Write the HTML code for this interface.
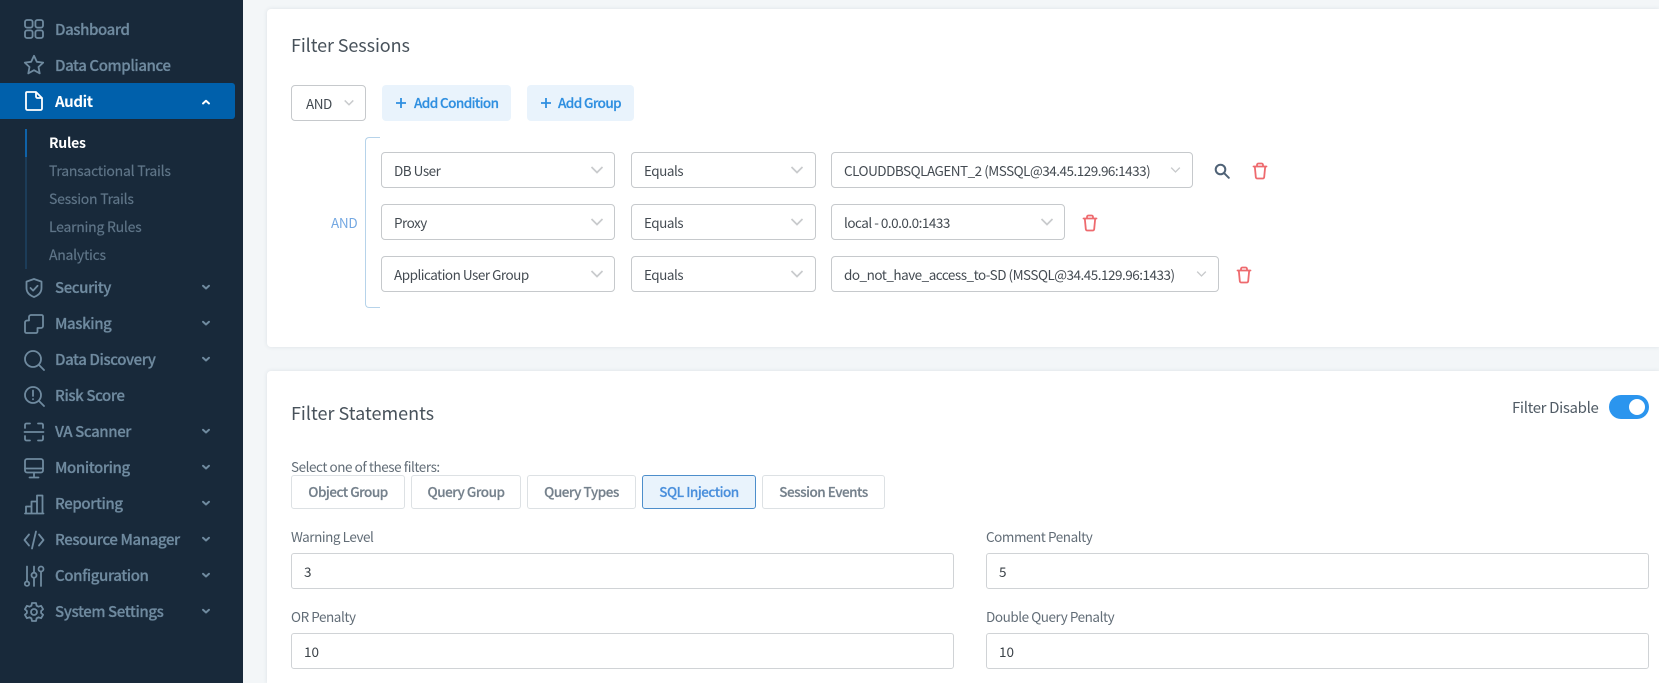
<!DOCTYPE html>
<html><head><meta charset="utf-8">
<style>
*{box-sizing:border-box;margin:0;padding:0}
html,body{width:1659px;height:683px;overflow:hidden;background:#f3f6f8;font-family:"Noto Sans CJK JP","Liberation Sans",sans-serif;}
#wrap{position:relative;width:1659px;height:683px;overflow:hidden}
.a{position:absolute;white-space:nowrap}
#side{position:absolute;left:0;top:0;width:243px;height:683px;background:#18293a}
.card{position:absolute;left:267px;width:1392px;background:#fff;border-radius:4px 0 0 4px;box-shadow:0 0 4px rgba(60,80,100,.12)}
.nav{position:absolute;left:55px;font-size:15px;line-height:20px;font-weight:500;color:#6f8a9f;letter-spacing:-.4px;-webkit-text-stroke:.25px currentColor}
.sub{position:absolute;left:49px;font-size:14px;line-height:20px;color:#5f7588;letter-spacing:-.25px;-webkit-text-stroke:.15px currentColor}
.ic{position:absolute;left:23px;width:22px;height:22px;fill:none;stroke:#6f8a9f;stroke-width:1.8;stroke-linecap:round;stroke-linejoin:round}
.cv{position:absolute;left:201px;width:10px;height:10px;fill:none;stroke:#6f8a9f;stroke-width:2;stroke-linecap:round;stroke-linejoin:round}
.sel{position:absolute;height:36px;background:#fff;border:1px solid #c6c9cc;border-radius:4px;font-size:13.5px;line-height:34px;padding-left:12px;color:#444b52;white-space:nowrap;letter-spacing:-.5px}
.sel svg{position:absolute;top:12px;width:14px;height:10px;fill:none;stroke:#c8cacc;stroke-width:1.7}
.btn{position:absolute;top:85px;height:36px;background:#e9f3fc;border-radius:4px;color:#2f8fe0;font-size:13.5px;line-height:35px;font-weight:500;white-space:nowrap;letter-spacing:-.6px;-webkit-text-stroke:.2px currentColor}
.tab{position:absolute;top:475px;height:34px;background:#fff;border:1px solid #dde1e4;border-radius:3px;color:#75818c;font-size:13.5px;font-weight:500;line-height:30px;text-align:center;letter-spacing:-.5px;-webkit-text-stroke:.2px currentColor}
.lab{position:absolute;font-size:13.5px;line-height:18px;color:#626d77;letter-spacing:-.45px;white-space:nowrap}
.inp{position:absolute;height:36px;width:663px;background:#fff;border:1px solid #d0d3d6;border-radius:3px;font-size:13.5px;line-height:34px;padding-left:12px;color:#3c4349}
.del{position:absolute;width:16px;height:18px;fill:none;stroke:#ee6a6e;stroke-width:1.8;stroke-linecap:round;stroke-linejoin:round}
</style></head><body><div id="wrap">
<div id="side">
<div class="a" style="left:0;top:83px;width:235px;height:36px;background:#0060ab;border-radius:0 3px 3px 0"></div>

<svg class="ic" style="top:18px" viewBox="0 0 22 22"><rect x="2" y="2" width="7.6" height="7.6" rx="2"/><rect x="12.4" y="2" width="7.6" height="7.6" rx="2"/><rect x="2" y="12.4" width="7.6" height="7.6" rx="2"/><rect x="12.4" y="12.4" width="7.6" height="7.6" rx="2"/></svg>
<div class="nav" style="top:20px">Dashboard</div>
<svg class="ic" style="top:54px" viewBox="0 0 22 22"><path d="M11 1.8l2.8 6 6.4.8-4.7 4.4 1.2 6.400-5.700-3.200-5.700 3.200 1.200-6.400L1.800 8.600l6.400-.8z"/></svg>
<div class="nav" style="top:56px">Data Compliance</div>
<svg class="ic" style="top:90px;stroke:#fff" viewBox="0 0 22 22"><path d="M4 2h9l6 6v10.500a1.500 1.500 0 0 1-1.500 1.500h-13A1.500 1.500 0 0 1 3 18.500V3a1 1 0 0 1 1-1zM13 2v4.500a1.500 1.500 0 0 0 1.500 1.500H19"/></svg>
<div class="nav" style="top:92px;color:#fff;font-weight:700;-webkit-text-stroke:0">Audit</div>
<svg class="cv" style="top:97px;stroke:#fff" viewBox="0 0 10 10"><path d="M2 6.500L5 3.800 8 6.500"/></svg>

<div class="a" style="left:25px;top:129px;width:2px;height:140px;background:#1c3c58"></div>
<div class="a" style="left:25px;top:129px;width:2px;height:28px;background:#0f62a8"></div>
<div class="sub" style="top:133px;color:#fff;font-weight:700;-webkit-text-stroke:0">Rules</div>
<div class="sub" style="top:161px">Transactional Trails</div>
<div class="sub" style="top:189px">Session Trails</div>
<div class="sub" style="top:217px">Learning Rules</div>
<div class="sub" style="top:245px">Analytics</div>

<svg class="ic" style="top:277px" viewBox="0 0 22 22"><path d="M11 2l7.500 2.600v6.400c0 4.200-3 7.300-7.500 9-4.500-1.700-7.500-4.800-7.500-9V4.600zM7.500 11l2.600 2.600 4.500-4.800"/></svg>
<div class="nav" style="top:278px">Security</div>
<svg class="cv" style="top:282px" viewBox="0 0 10 10"><path d="M2 3.800L5 6.500 8 3.800"/></svg>

<svg class="ic" style="top:313px" viewBox="0 0 22 22"><path d="M8 2h10.500A1.500 1.500 0 0 1 20 3.500V13a2 2 0 0 1-2 2h-3.500v3.500a1.500 1.500 0 0 1-1.500 1.500H3.500A1.500 1.500 0 0 1 2 18.500V9.500a2 2 0 0 1 2-2h2V4a2 2 0 0 1 2-2z" /></svg>
<div class="nav" style="top:314px">Masking</div>
<svg class="cv" style="top:318px" viewBox="0 0 10 10"><path d="M2 3.800L5 6.500 8 3.800"/></svg>

<svg class="ic" style="top:349px" viewBox="0 0 22 22"><circle cx="10" cy="10" r="8"/><path d="M15.800 15.800L21 21"/></svg>
<div class="nav" style="top:350px">Data Discovery</div>
<svg class="cv" style="top:354px" viewBox="0 0 10 10"><path d="M2 3.800L5 6.500 8 3.800"/></svg>

<svg class="ic" style="top:385px" viewBox="0 0 22 22"><circle cx="10" cy="10" r="8"/><path d="M15.800 15.800L21 21M10 5.500v5.500M10 14v.4"/></svg>
<div class="nav" style="top:386px">Risk Score</div>

<svg class="ic" style="top:421px" viewBox="0 0 22 22"><path d="M2 7V4a1.500 1.500 0 0 1 1.500-1.500H7M15 2.500h3.500A1.500 1.500 0 0 1 20 4v3M1.500 11h19M2 15v3a1.500 1.500 0 0 0 1.500 1.500H7M15 19.500h3.500A1.500 1.500 0 0 0 20 18v-3"/></svg>
<div class="nav" style="top:422px">VA Scanner</div>
<svg class="cv" style="top:426px" viewBox="0 0 10 10"><path d="M2 3.800L5 6.500 8 3.800"/></svg>

<svg class="ic" style="top:457px" viewBox="0 0 22 22"><rect x="2" y="2" width="18" height="13.500" rx="2"/><path d="M2 11.500h18M11 15.500v5M6.500 20.500h9"/></svg>
<div class="nav" style="top:458px">Monitoring</div>
<svg class="cv" style="top:462px" viewBox="0 0 10 10"><path d="M2 3.800L5 6.500 8 3.800"/></svg>

<svg class="ic" style="top:493px" viewBox="0 0 22 22"><path d="M2 20.500h18.500M3 20.500v-7h5.500v7M8.500 20.500V8.500H14v12M14 20.500V2.500h5.500v18"/></svg>
<div class="nav" style="top:494px">Reporting</div>
<svg class="cv" style="top:498px" viewBox="0 0 10 10"><path d="M2 3.800L5 6.500 8 3.800"/></svg>

<svg class="ic" style="top:529px" viewBox="0 0 22 22"><path d="M6 5.500L1.500 11 6 16.500M16 5.500L20.500 11 16 16.500M13 2.500L9 19.500"/></svg>
<div class="nav" style="top:530px">Resource Manager</div>
<svg class="cv" style="top:534px" viewBox="0 0 10 10"><path d="M2 3.800L5 6.500 8 3.800"/></svg>

<svg class="ic" style="top:565px" viewBox="0 0 22 22"><path d="M4 1.500v15M11 1.500v6M11 13v8M18 7v14"/><circle cx="4" cy="18.700" r="2.200"/><circle cx="11" cy="10.200" r="2.500"/><circle cx="18" cy="4" r="2.500"/></svg>
<div class="nav" style="top:566px">Configuration</div>
<svg class="cv" style="top:570px" viewBox="0 0 10 10"><path d="M2 3.800L5 6.500 8 3.800"/></svg>

<svg class="ic" style="top:601px" viewBox="0 0 22 22"><circle cx="11" cy="11" r="3"/><path d="M9 2h4l.6 2.700 1.900 1 2.600-.9 2 3.400-2 1.800v2l2 1.800-2 3.400-2.600-.9-1.900 1L13 20h-4l-.6-2.700-1.900-1-2.600.9-2-3.400 2-1.800v-2l-2-1.800 2-3.400 2.600.9 1.900-1z"/></svg>
<div class="nav" style="top:602px">System Settings</div>
<svg class="cv" style="top:606px" viewBox="0 0 10 10"><path d="M2 3.800L5 6.500 8 3.800"/></svg>
</div>

<div class="card" style="top:9px;height:338px"></div>
<div class="card" style="top:371px;height:312px;border-radius:4px 0 0 0"></div>

<div class="a" style="left:291px;top:32px;font-size:18px;line-height:26px;color:#48525b;letter-spacing:-.1px">Filter Sessions</div>

<div class="sel" style="left:291px;top:85px;width:75px;height:36px;padding-left:14px">AND<svg style="left:51px;top:12px;width:12px" viewBox="0 0 14 10"><path d="M2 2l5 5 5-5"/></svg></div>
<div class="btn" style="left:382px;width:129px;padding-left:32px">Add Condition<svg class="a" style="left:13px;top:12px;width:12px;height:12px;fill:none;stroke:#2f8fe0;stroke-width:1.800" viewBox="0 0 12 12"><path d="M6 1v10M1 6h10"/></svg></div>
<div class="btn" style="left:527px;width:107px;padding-left:31px">Add Group<svg class="a" style="left:13px;top:12px;width:12px;height:12px;fill:none;stroke:#2f8fe0;stroke-width:1.800" viewBox="0 0 12 12"><path d="M6 1v10M1 6h10"/></svg></div>

<div class="a" style="left:331px;top:212px;font-size:13.5px;line-height:20px;color:#74a8e2;letter-spacing:-.3px">AND</div>
<div class="a" style="left:365px;top:137px;width:15px;height:171px;border:1px solid #b6d3ea;border-right:0;border-radius:4px 0 0 4px"></div>

<div class="sel" style="left:381px;top:152px;width:234px">DB User<svg style="left:208px" viewBox="0 0 14 10"><path d="M1.500 2l5.500 5.500L12.500 2"/></svg></div>
<div class="sel" style="left:631px;top:152px;width:185px">Equals<svg style="left:158px" viewBox="0 0 14 10"><path d="M1.500 2l5.500 5.500L12.500 2"/></svg></div>
<div class="sel" style="left:831px;top:152px;width:362px">CLOUDDBSQLAGENT_2 (MSSQL@34.45.129.96:1433)<svg style="left:338px;width:11px" viewBox="0 0 14 10"><path d="M1.500 2l5.500 5.500L12.500 2"/></svg></div>

<div class="sel" style="left:381px;top:204px;width:234px">Proxy<svg style="left:208px" viewBox="0 0 14 10"><path d="M1.500 2l5.500 5.500L12.500 2"/></svg></div>
<div class="sel" style="left:631px;top:204px;width:185px">Equals<svg style="left:158px" viewBox="0 0 14 10"><path d="M1.500 2l5.500 5.500L12.500 2"/></svg></div>
<div class="sel" style="left:831px;top:204px;width:234px">local - 0.0.0.0:1433<svg style="left:208px" viewBox="0 0 14 10"><path d="M1.500 2l5.500 5.500L12.500 2"/></svg></div>

<div class="sel" style="left:381px;top:256px;width:234px;line-height:35px">Application User Group<svg style="left:208px" viewBox="0 0 14 10"><path d="M1.500 2l5.500 5.500L12.500 2"/></svg></div>
<div class="sel" style="left:631px;top:256px;width:185px;line-height:35px">Equals<svg style="left:158px" viewBox="0 0 14 10"><path d="M1.500 2l5.500 5.500L12.500 2"/></svg></div>
<div class="sel" style="left:831px;top:256px;width:388px">do_not_have_access_to-SD (MSSQL@34.45.129.96:1433)<svg style="left:364px;width:11px" viewBox="0 0 14 10"><path d="M1.500 2l5.500 5.500L12.500 2"/></svg></div>

<svg class="a" style="left:1214px;top:163px;width:16px;height:16px;fill:none;stroke:#4f6276;stroke-width:2;stroke-linecap:round" viewBox="0 0 16 16"><circle cx="6.500" cy="6.500" r="4.800"/><path d="M10.200 10.200L14.800 14.800"/></svg>
<svg class="del" style="left:1252px;top:162px" viewBox="0 0 16 18"><path d="M1.500 4.500h13M5 4.500V3a1.500 1.500 0 0 1 1.500-1.500h3A1.500 1.500 0 0 1 11 3v1.500M2.800 4.500l1 10.500a1.500 1.500 0 0 0 1.500 1.500h5.400a1.500 1.500 0 0 0 1.500-1.500l1-10.500"/></svg>
<svg class="del" style="left:1082px;top:214px" viewBox="0 0 16 18"><path d="M1.500 4.500h13M5 4.500V3a1.500 1.500 0 0 1 1.500-1.500h3A1.500 1.500 0 0 1 11 3v1.500M2.800 4.500l1 10.500a1.500 1.500 0 0 0 1.500 1.500h5.400a1.500 1.500 0 0 0 1.500-1.500l1-10.500"/></svg>
<svg class="del" style="left:1236px;top:266px" viewBox="0 0 16 18"><path d="M1.500 4.500h13M5 4.500V3a1.500 1.500 0 0 1 1.500-1.500h3A1.500 1.500 0 0 1 11 3v1.500M2.800 4.500l1 10.500a1.500 1.500 0 0 0 1.500 1.500h5.400a1.500 1.500 0 0 0 1.500-1.500l1-10.500"/></svg>

<div class="a" style="left:291px;top:400px;font-size:18px;line-height:26px;color:#48525b;letter-spacing:0">Filter Statements</div>
<div class="a" style="left:1512px;top:398px;font-size:15px;line-height:20px;color:#515c66;letter-spacing:-.35px">Filter Disable</div>
<div class="a" style="left:1609px;top:395px;width:40px;height:24px;border-radius:12px;background:#2b95ee"></div>
<div class="a" style="left:1629px;top:399px;width:16px;height:16px;border-radius:50%;background:#fff"></div>

<div class="lab" style="left:291px;top:457px">Select one of these filters:</div>
<div class="tab" style="left:291px;width:114px">Object Group</div>
<div class="tab" style="left:411px;width:110px">Query Group</div>
<div class="tab" style="left:527px;width:109px">Query Types</div>
<div class="tab" style="left:642px;width:114px;background:#e9f3fc;border-color:#4d8ecb;color:#4a8fdc">SQL Injection</div>
<div class="tab" style="left:762px;width:123px">Session Events</div>

<div class="lab" style="left:291px;top:527px">Warning Level</div>
<div class="inp" style="left:291px;top:553px">3</div>
<div class="lab" style="left:986px;top:527px">Comment Penalty</div>
<div class="inp" style="left:986px;top:553px">5</div>
<div class="lab" style="left:291px;top:607px">OR Penalty</div>
<div class="inp" style="left:291px;top:633px">10</div>
<div class="lab" style="left:986px;top:607px">Double Query Penalty</div>
<div class="inp" style="left:986px;top:633px">10</div>
</div></body></html>
